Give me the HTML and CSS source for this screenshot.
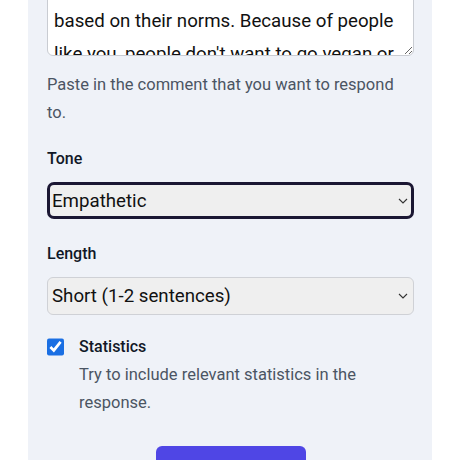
FILE: index.html
```html
<!DOCTYPE html>
<html lang="en">
<head>
  <meta charset="UTF-8" />
  <title>Reply Helper</title>
  <link rel="stylesheet" href="styles.css">
</head>
<body>
  <main class="panel">
    <!-- Comment -->
    <div class="field">
      <textarea class="comment" spellcheck="false">People judge vegans and vegetarians
based on their norms. Because of people
like you, people don't want to go vegan or
vegetarian at all.</textarea>
      <p class="help">Paste in the comment that you want to respond to.</p>
    </div>

    <!-- Tone -->
    <div class="field field-tone">
      <label class="label" for="tone">Tone</label>
      <div class="select-wrap">
        <select id="tone" class="select focused">
          <option>Empathetic</option>
          <option>Direct</option>
          <option>Humorous</option>
        </select>
        <svg class="chevron" width="10" height="6" viewBox="0 0 10 6"><path d="M1 1l4 4 4-4" fill="none" stroke="#333" stroke-width="1.1"/></svg>
      </div>
    </div>

    <!-- Length -->
    <div class="field">
      <label class="label" for="length">Length</label>
      <div class="select-wrap">
        <select id="length" class="select">
          <option>Short (1-2 sentences)</option>
          <option>Medium (3-5 sentences)</option>
          <option>Long (paragraph)</option>
        </select>
        <svg class="chevron" width="10" height="6" viewBox="0 0 10 6"><path d="M1 1l4 4 4-4" fill="none" stroke="#333" stroke-width="1.1"/></svg>
      </div>
    </div>

    <!-- Options -->
    <div class="check-row">
      <input type="checkbox" id="stats" class="check" checked>
      <div class="check-text">
        <label class="label" for="stats">Statistics</label>
        <p class="help">Try to include relevant statistics in the response.</p>
      </div>
    </div>

    <div class="actions">
      <button class="btn">Generate</button>
    </div>
  </main>
</body>
</html>
```

FILE: styles.css
```css
/* ---- Global ---- */
html, body {
  margin: 0;
  padding: 0;
  overflow: hidden;
  background: #ffffff;
  font-family: Roboto, "Noto Sans", sans-serif;
  color: #111827;
}

/* ---- Panel ---- */
.panel {
  width: 404px;
  margin: 0 28px;
  padding: 0 18px 40px 19px;
  box-sizing: border-box;
  background: #eff2f8;
  min-height: 460px;
}

.field {
  margin-bottom: 20px;
}
.field-tone {
  margin-bottom: 23px;
}

/* ---- Textarea ---- */
.comment {
  display: block;
  width: 100%;
  height: 93px;
  margin-top: -37px;
  box-sizing: border-box;
  padding: 8px 6px;
  border: 1px solid #c9ccd2;
  border-radius: 6px;
  background: #ffffff;
  font-family: inherit;
  font-size: 18.7px;
  line-height: 33px;
  color: #111;
  white-space: pre;
  overflow: hidden;
}

.help {
  margin: 15px 0 0;
  font-size: 16.5px;
  line-height: 28px;
  color: #4b5563;
}

.label {
  display: block;
  font-size: 16px;
  font-weight: 500;
  line-height: 24px;
  margin-bottom: 11px;
}

/* ---- Selects ---- */
.select-wrap {
  position: relative;
}
.select {
  display: block;
  width: 100%;
  height: 38px;
  box-sizing: border-box;
  padding: 0 24px 0 4px;
  appearance: none;
  border: 1px solid #cfd1d6;
  border-radius: 6px;
  background: #efefef;
  font-family: inherit;
  font-size: 18.7px;
  color: #111;
}
.select.focused {
  height: 37px;
  border: 3px solid #1b1733;
  border-radius: 7px;
  padding-left: 2px;
}
.chevron {
  position: absolute;
  right: 6px;
  top: 16px;
}

/* ---- Checkbox ---- */
.check-row {
  display: flex;
  gap: 15px;
  margin-top: 20px;
}
.check {
  width: 18px;
  height: 18px;
  margin: 3px 0 0;
  accent-color: #1a6fe3;
}
.check-text .label {
  margin-bottom: 0;
}
.check-text .help {
  margin-top: 2px;
}

/* ---- Button ---- */
.actions {
  display: flex;
  justify-content: center;
  margin-top: 29px;
}
.btn {
  width: 150px;
  height: 42px;
  border: none;
  border-radius: 6px;
  background: #4f46e5;
  color: #fff;
  font-family: inherit;
  font-size: 16px;
  font-weight: 500;
}
```
